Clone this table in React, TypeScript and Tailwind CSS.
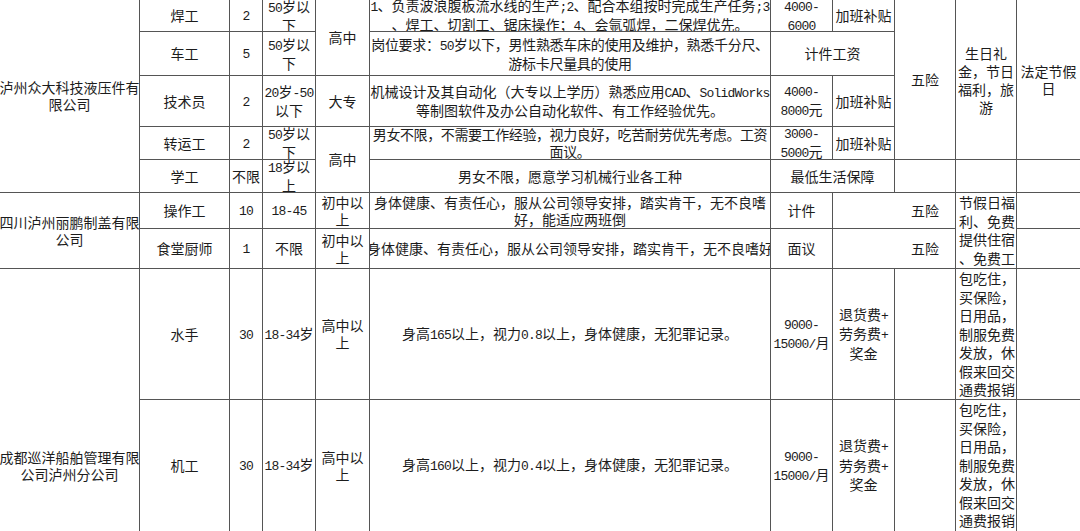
import React from 'react';

// split ascii runs so they get the narrow half-width look of the sheet font
function M({ t }: { t: string }) {
  const parts = t.split(/([\x21-\x7e]+)/);
  return (
    <>
      {parts.map((p, i) =>
        /[\x21-\x7e]/.test(p) ? (
          <span key={i} className="font-['Liberation_Mono',monospace] text-[13px] tracking-[-0.8px]">
            {p}
          </span>
        ) : (
          <span key={i}>{p}</span>
        )
      )}
    </>
  );
}

interface CellProps {
  pos: string;
  lines?: string[];
  edge?: string;
  align?: string;
  lead?: string;
  extra?: string;
}

function Cell({
  pos,
  lines = [],
  edge = 'border-r border-b',
  align = 'items-center justify-center text-center',
  lead = 'leading-[17px]',
  extra = '',
}: CellProps) {
  return (
    <div className={`flex flex-col overflow-hidden whitespace-nowrap border-[#555] ${edge} ${align} ${lead} ${pos} ${extra}`}>
      {lines.map((l, i) => (
        <div key={i}>
          <M t={l} />
        </div>
      ))}
    </div>
  );
}

const ROWS = [
  'row-start-1',
  'row-start-2',
  'row-start-3',
  'row-start-4',
  'row-start-5',
  'row-start-6',
  'row-start-7',
  'row-start-8',
  'row-start-9',
];

const jobs = ['焊工', '车工', '技术员', '转运工', '学工', '操作工', '食堂厨师', '水手', '机工'];
const counts = ['2', '5', '2', '2', '不限', '10', '1', '30', '30'];
const ages = [
  ['50岁以', '下'],
  ['50岁以', '下'],
  ['20岁-50', '以下'],
  ['50岁以', '下'],
  ['18岁以', '上'],
  ['18-45'],
  ['不限'],
  ['18-34岁'],
  ['18-34岁'],
];
const reqs = [
  ['1、负责波浪腹板流水线的生产;2、配合本组按时完成生产任务;3', '、焊工、切割工、锯床操作；4、会氩弧焊，二保焊优先。'],
  ['岗位要求：50岁以下，男性熟悉车床的使用及维护，熟悉千分尺、', '游标卡尺量具的使用'],
  ['机械设计及其自动化（大专以上学历）熟悉应用CAD、SolidWorks', '等制图软件及办公自动化软件、有工作经验优先。'],
  ['男女不限，不需要工作经验，视力良好，吃苦耐劳优先考虑。工资', '面议。'],
  ['男女不限，愿意学习机械行业各工种'],
  ['身体健康、有责任心，服从公司领导安排，踏实肯干，无不良嗜', '好，能适应两班倒'],
  ['身体健康、有责任心，服从公司领导安排，踏实肯干，无不良嗜好'],
  ['身高165以上，视力0.8以上，身体健康，无犯罪记录。'],
  ['身高160以上，视力0.4以上，身体健康，无犯罪记录。'],
];
const reqFit = ['', 'tracking-[-0.3px]', '', 'tracking-[-0.4px]', '', '', '', '', ''];

const perks = ['包吃住，', '买保险，', '日用品，', '制服免费', '发放，休', '假来回交', '通费报销'];
const leftTop = 'items-start justify-start text-left pl-[3px]';

export default function App() {
  return (
    <div className="w-[1080px] h-[531px] overflow-hidden bg-white text-[14px] text-[#1c1c1c] font-['Noto_Sans_CJK_SC','Noto_Sans',sans-serif]">
      <div className="grid h-full grid-cols-[140px_90px_33px_53px_54px_401px_62px_62px_61px_61px_63px] grid-rows-[32px_44px_51px_33px_33px_36px_40px_131px_131px]">
        {/* company */}
        <Cell pos="col-start-1 row-start-1 row-span-5" lines={['泸州众大科技液压件有', '限公司']} />
        <Cell pos="col-start-1 row-start-6 row-span-2" lines={['四川泸州丽鹏制盖有限', '公司']} />
        <Cell
          pos="col-start-1 row-start-8 row-span-2"
          edge="border-r"
          align="items-center justify-start text-center pt-[180px]"
          lines={['成都巡洋船舶管理有限', '公司泸州分公司']}
        />

        {jobs.map((j, i) => (
          <Cell key={'j' + i} pos={`col-start-2 ${ROWS[i]}`} edge={i === 8 ? 'border-r' : 'border-r border-b'} lines={[j]} />
        ))}
        {counts.map((c, i) => (
          <Cell key={'c' + i} pos={`col-start-3 ${ROWS[i]}`} edge={i === 8 ? 'border-r' : 'border-r border-b'} lines={[c]} />
        ))}
        {ages.map((a, i) => (
          <Cell key={'a' + i} pos={`col-start-4 ${ROWS[i]}`} edge={i === 8 ? 'border-r' : 'border-r border-b'} lines={a} />
        ))}

        {/* education */}
        <Cell pos="col-start-5 row-start-1 row-span-2" lines={['高中']} />
        <Cell pos="col-start-5 row-start-3" lines={['大专']} />
        <Cell pos="col-start-5 row-start-4 row-span-2" lines={['高中']} />
        <Cell pos="col-start-5 row-start-6" lines={['初中以', '上']} />
        <Cell pos="col-start-5 row-start-7" lines={['初中以', '上']} />
        <Cell pos="col-start-5 row-start-8" lines={['高中以', '上']} />
        <Cell pos="col-start-5 row-start-9" edge="border-r" lines={['高中以', '上']} />

        {reqs.map((r, i) => (
          <Cell
            key={'r' + i}
            pos={`col-start-6 ${ROWS[i]}`}
            edge={i === 8 ? 'border-r' : 'border-r border-b'}
            extra={reqFit[i]}
            lines={r}
          />
        ))}

        {/* salary + subsidy */}
        <Cell pos="col-start-7 row-start-1" lines={['4000-', '6000']} />
        <Cell pos="col-start-8 row-start-1" lines={['加班补贴']} />
        <Cell pos="col-start-7 row-start-2 col-span-2" lines={['计件工资']} />
        <Cell pos="col-start-7 row-start-3" lines={['4000-', '8000元']} />
        <Cell pos="col-start-8 row-start-3" lines={['加班补贴']} />
        <Cell pos="col-start-7 row-start-4" lines={['3000-', '5000元']} />
        <Cell pos="col-start-8 row-start-4" lines={['加班补贴']} />
        <Cell pos="col-start-7 row-start-5 col-span-2" lines={['最低生活保障']} />
        <Cell pos="col-start-7 row-start-6" lines={['计件']} />
        <Cell pos="col-start-8 row-start-6" edge="border-b" />
        <Cell pos="col-start-7 row-start-7" lines={['面议']} />
        <Cell pos="col-start-8 row-start-7" edge="border-b" />
        <Cell pos="col-start-7 row-start-8" lines={['9000-', '15000/月']} />
        <Cell pos="col-start-8 row-start-8" lines={['退货费+', '劳务费+', '奖金']} lead="leading-[17.5px]" />
        <Cell pos="col-start-7 row-start-9" edge="border-r" lines={['9000-', '15000/月']} />
        <Cell pos="col-start-8 row-start-9" edge="border-r" lines={['退货费+', '劳务费+', '奖金']} lead="leading-[17.5px]" />

        {/* insurance */}
        <Cell pos="col-start-9 row-start-1 row-span-4" lines={['五险']} />
        <Cell pos="col-start-9 row-start-5" />
        <Cell pos="col-start-9 row-start-6" lines={['五险']} />
        <Cell pos="col-start-9 row-start-7" lines={['五险']} />
        <Cell pos="col-start-9 row-start-8" />
        <Cell pos="col-start-9 row-start-9" edge="border-r" />

        {/* benefits */}
        <Cell pos="col-start-10 row-start-1 row-span-4" lead="leading-[18px]" lines={['生日礼', '金，节日', '福利，旅', '游']} />
        <Cell pos="col-start-10 row-start-5" />
        <Cell pos="col-start-10 row-start-6 row-span-2" align={leftTop} lead="leading-[18.5px]" lines={['节假日福', '利、免费', '提供住宿', '、免费工']} />
        <Cell pos="col-start-10 row-start-8" align={leftTop} lead="leading-[18.5px]" lines={perks} />
        <Cell pos="col-start-10 row-start-9" edge="border-r" align={leftTop} lead="leading-[18.5px]" lines={perks} />

        {/* holidays */}
        <Cell pos="col-start-11 row-start-1 row-span-4" edge="border-b" lines={['法定节假', '日']} />
        <Cell pos="col-start-11 row-start-5" edge="border-b" />
        <Cell pos="col-start-11 row-start-6" edge="border-b" />
        <Cell pos="col-start-11 row-start-7" edge="border-b" />
        <Cell pos="col-start-11 row-start-8" edge="border-b" />
        <Cell pos="col-start-11 row-start-9" edge="" />
      </div>
    </div>
  );
}
